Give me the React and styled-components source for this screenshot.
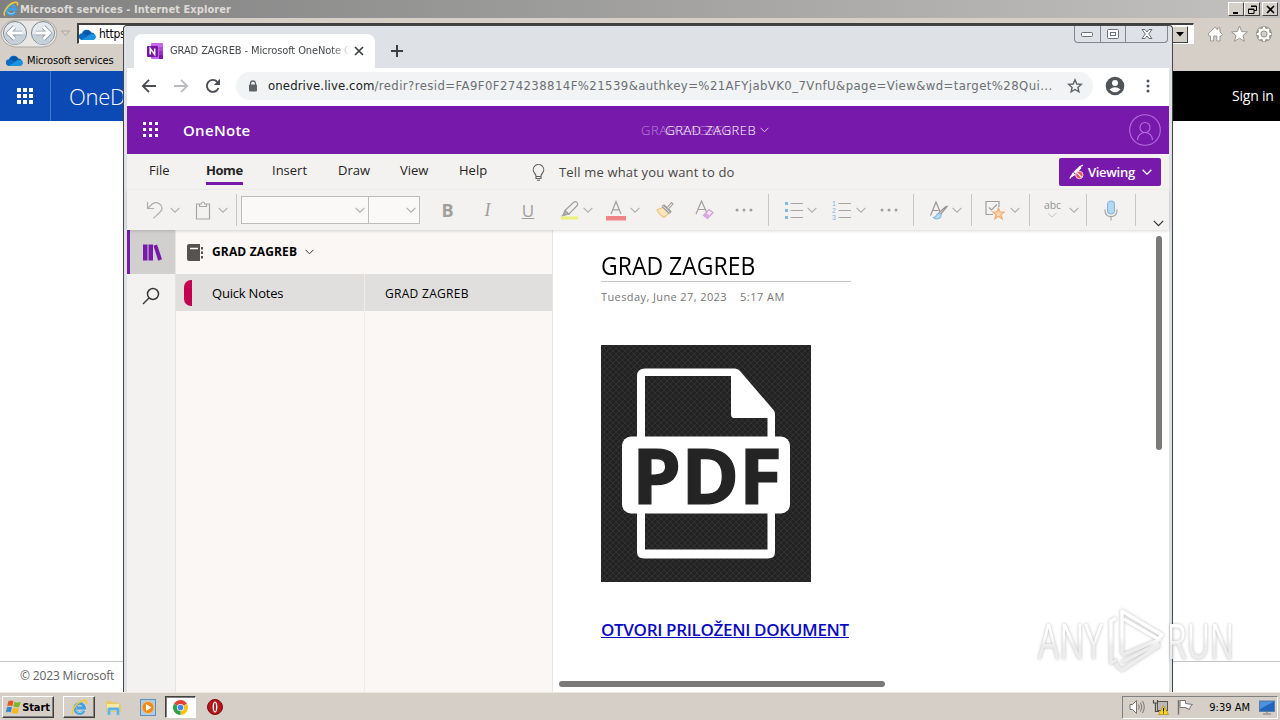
import React from 'react';
import styled, { createGlobalStyle } from 'styled-components';

const GlobalStyle = createGlobalStyle`
  * { box-sizing: border-box; }
  body { margin: 0; background: #fff; overflow: hidden; }
  svg { display: block; flex: none; }
`

const SEGOE = '"Open Sans", "Noto Sans", sans-serif';
const TAHOMA = '"DejaVu Sans Condensed", "DejaVu Sans", sans-serif';

const Desktop = styled.div`
  position: relative;
  width: 1280px;
  height: 720px;
  overflow: hidden;
  display: flex;
  flex-direction: column;
  font-family: ${SEGOE};
`

const Text = styled.span`
  font-family: ${p => p.$font || SEGOE};
  font-size: ${p => p.$size || 13}px;
  font-weight: ${p => p.$weight || 400};
  letter-spacing: ${p => p.$track || 0}px;
  color: ${p => p.$color || '#000'};
  line-height: 1;
  white-space: nowrap;
`

/* fixed width slot of a bar */
const Cell = styled.div`
  display: flex;
  flex: none;
  width: ${p => p.$w}px;
  justify-content: ${p => p.$align || 'center'};
  align-items: center;
`

/* ---------- Internet Explorer ---------- */

const IeWindow = styled.div`
  height: 692px;
  display: flex;
  flex-direction: column;
  background: #fff;
`

const IeTitle = styled.div`
  height: 18px;
  display: flex;
  align-items: center;
  padding: 0 2px 0 3px;
  background: linear-gradient(90deg, #808080, #c2c1bf);
`

const IeTitleText = styled(Text)`
  margin-left: 1px;
  flex: 1;
`

const WinButton = styled.div`
  width: 16px;
  height: 14px;
  margin-left: ${p => p.$gap || 0}px;
  display: flex;
  align-items: center;
  justify-content: center;
  background: #d4d0c8;
  border: 1px solid;
  border-color: #fff #404040 #404040 #fff;
`

const IeNav = styled.div`
  height: 31px;
  display: flex;
  align-items: center;
  background: #d6cfc7;
`

const IeAddress = styled.div`
  height: 21px;
  width: 1117px;
  flex: none;
  margin: 0 0 0 6px;
  display: flex;
  align-items: center;
  background: #fff;
  border: 1px solid #404040;
  border-width: 2px 1px 1px 2px;
  border-right-color: #fff;
  border-bottom-color: #fff;
`

const AddressText = styled(Text)`
  margin-left: 3px;
`

const AddressDrop = styled(WinButton)`
  height: 17px;
  margin-left: auto;
  margin-right: 5px;
`

const IeFavorites = styled.div`
  height: 22px;
  display: flex;
  align-items: center;
  gap: 4px;
  padding-left: 6px;
  background: #d6cfc7;
`

const IeHeader = styled.div`
  height: 50px;
  display: flex;
  background: linear-gradient(90deg, #0b4ab5 0 500px, #000 500px);
`

const Waffle = styled.div`
  width: 51px;
  display: flex;
  align-items: center;
  justify-content: center;
  border-right: 1px solid #4478ca;
`

const IeBrand = styled(Text)`
  margin: 14px 0 0 18px;
  flex: 1;
`

const IeFooter = styled.div`
  margin-top: auto;
  height: 31px;
  display: flex;
  align-items: flex-start;
  border-top: 1px solid #c4c4c4;
  padding: 8px 0 0 20px;
`

/* ---------- Chrome ---------- */

const ChromeWindow = styled.div`
  position: absolute;
  left: 123px;
  top: 25px;
  width: 1050px;
  height: 667px;
  display: flex;
  flex-direction: column;
  border: 1px solid #454545;
  border-bottom: 0;
  border-radius: 4px 4px 0 0;
  background: #dee1e6;
  padding: 0 3px;
  overflow: hidden;
`

const TabStrip = styled.div`
  height: 42px;
  flex: none;
  display: flex;
  align-items: flex-end;
  padding-left: 7px;
`

const Tab = styled.div`
  width: 241px;
  height: 34px;
  display: flex;
  align-items: center;
  padding: 0 5px 0 13px;
  background: #fff;
  border-radius: 8px 8px 0 0;
`

const TabTitle = styled(Text)`
  margin-left: 7px;
  flex: 0 0 180px;
  overflow: hidden;
  line-height: 16px;
  mask-image: linear-gradient(90deg, #000 90%, transparent);
`

const NewTab = styled.div`
  align-self: center;
  margin: 8px 0 0 15px;
`

const Caption = styled.div`
  align-self: flex-start;
  margin-left: auto;
  margin-right: 1px;
  display: flex;
  height: 17px;
  border: 1px solid #81868f;
  border-top: 0;
  border-radius: 0 0 4px 4px;
`

const CaptionButton = styled.div`
  width: ${p => p.$w}px;
  display: flex;
  align-items: center;
  justify-content: center;
  & + & { border-left: 1px solid #81868f; }
`

const Toolbar = styled.div`
  height: 38px;
  flex: none;
  display: flex;
  align-items: center;
  background: #fff;
  padding: 0 0 2px 6px;
`

const Omnibox = styled.div`
  width: 857px;
  height: 28px;
  flex: none;
  margin-left: 7px;
  display: flex;
  align-items: center;
  padding-left: 12px;
  background: #f1f3f4;
  border-radius: 14px;
`

const Url = styled(Text)`
  width: 799px;
  flex: none;
  margin-left: 10px;
  line-height: 20px;
  b { font-weight: 400; color: #202124; letter-spacing: .12px; }
`

/* ---------- OneNote ---------- */

const NoteHeader = styled.div`
  height: 48px;
  flex: none;
  display: flex;
  align-items: center;
  background: #7719aa;
`

const NoteBrand = styled(Text)`
  margin-left: 9px;
`

const GhostTitle = styled(Text)`
  margin-right: -67px;
`

const Account = styled.div`
  margin: 0 8px 0 auto;
`

const MenuBar = styled.div`
  height: 36px;
  flex: none;
  display: flex;
  align-items: center;
  background: #f3f2f1;
  padding-left: 22px;
`

const MenuItem = styled.div`
  width: ${p => p.$w}px;
  height: 36px;
  flex: none;
  display: flex;
  align-items: flex-start;
  padding-top: 10px;
`

const Underlined = styled.div`
  width: 37px;
  height: 21px;
  border-bottom: 3px solid #7719aa;
  display: flex;
  align-items: flex-start;
`

const Viewing = styled.div`
  width: 102px;
  height: 28px;
  display: flex;
  align-items: center;
  padding-left: 10px;
  gap: 4px;
  background: #7719aa;
  border-radius: 2px;
  svg:last-child { margin-left: 3px; }
`

const Ribbon = styled.div`
  height: 40px;
  flex: none;
  display: flex;
  align-items: center;
  background: #f3f2f1;
  box-shadow: 0 1px 3px rgba(0, 0, 0, .16);
  z-index: 1;
`

const Sep = styled.div`
  width: 1px;
  height: 32px;
  flex: none;
  margin-left: ${p => p.$gap || 0}px;
  background: #c8c6c4;
`

const Expand = styled.div`
  width: 28px;
  display: flex;
  justify-content: flex-end;
  padding-top: 26px;
`

const Combo = styled.div`
  width: ${p => p.$w}px;
  height: 28px;
  flex: none;
  display: flex;
  align-items: center;
  justify-content: flex-end;
  margin-left: ${p => p.$gap || 0}px;
  padding-right: 3px;
  background: #faf9f8;
  border: 1px solid #bebbb8;
  & + & { border-left: 0; }
`

const Body = styled.div`
  flex: 1;
  display: flex;
  min-height: 0;
`

const Rail = styled.div`
  width: 49px;
  flex: none;
  background: #f3f2f1;
  border-right: 1px solid #e6e3e1;
`

const RailButton = styled.div`
  height: 44px;
  width: 48px;
  display: flex;
  align-items: center;
  justify-content: center;
  background: ${p => p.$on ? '#d2d0ce' : 'transparent'};
  border-left: ${p => p.$on ? '3px solid #7719aa' : '0'};
`

const Panel = styled.div`
  width: 377px;
  flex: none;
  display: flex;
  flex-direction: column;
  background: #faf7f5;
  border-right: 1px solid #e8e5e3;
`

const Notebook = styled.div`
  height: 44px;
  display: flex;
  align-items: center;
  gap: 8px;
  padding-left: 11px;
`

const Columns = styled.div`
  flex: 1;
  display: grid;
  grid-template-columns: 188px 1fr;
`

const Column = styled.div`
  & + & { border-left: 1px solid #efecea; }
`

const Row = styled.div`
  height: 37px;
  display: flex;
  align-items: center;
  background: #e1dfdd;
  padding: ${p => p.$top || 1}px 0 0 ${p => p.$pad}px;
`

const Marker = styled.div`
  width: 8px;
  height: 26px;
  margin-right: 20px;
  background: #c3004f;
  border-radius: 7px 0 0 7px;
`

const Page = styled.div`
  flex: 1;
  display: flex;
  flex-direction: column;
  align-items: flex-start;
  position: relative;
  background: #fff;
  padding: 22px 0 0 48px;
`

const PageTitle = styled.div`
  width: 250px;
  height: 30px;
  display: flex;
  align-items: flex-start;
  padding-top: 1px;
  border-bottom: 1px solid #c6c6c6;
`

const NarrowTitle = styled(Text)`
  transform: scaleX(.92);
  transform-origin: 0 0;
`

const DateRow = styled.div`
  display: flex;
  align-items: center;
  height: 14px;
  margin-top: 7px;
`

const Picture = styled.div`
  margin-top: 42px;
`

const DocLink = styled.a`
  margin-top: 36px;
  font-size: 17px;
  font-weight: 600;
  line-height: 24px;
  letter-spacing: -.33px;
  color: #0a0ac4;
  text-decoration: underline;
  white-space: nowrap;
`

const ScrollThumb = styled.div`
  position: absolute;
  border-radius: 3px;
  background: #7c7a79;
  ${p => p.$vertical
    ? 'right: 7px; top: 6px; width: 6px; height: 214px;'
    : 'left: 6px; bottom: 5px; width: 326px; height: 6px;'}
`

/* ---------- Taskbar ---------- */

const Taskbar = styled.div`
  height: 28px;
  display: flex;
  align-items: center;
  background: #d6cfc7;
  border-top: 1px solid #ece8e2;
  padding: 1px 2px 0;
`

const TaskButton = styled.div`
  width: ${p => p.$w}px;
  height: 22px;
  flex: none;
  display: flex;
  align-items: center;
  justify-content: center;
  margin-left: ${p => p.$gap || 0}px;
  border: 1px solid;
  border-color: ${p => p.$active ? '#404040 #fff #fff #404040' : '#fff #404040 #404040 #fff'};
  box-shadow: ${p => p.$active ? 'inset 1px 1px #808080' : 'inset -1px -1px #808080'};
  background: ${p => p.$active ? '#fff' : '#d6cfc7'};
`

const Tray = styled.div`
  width: 156px;
  height: 23px;
  margin-left: auto;
  display: flex;
  align-items: center;
  border: 1px solid;
  border-color: #808080 #fff #fff #808080;
  padding-left: 4px;
`

const Clock = styled(Text)`
  margin-right: 6px;
`

const Watermark = styled.svg`
  position: absolute;
  left: 1030px;
  top: 600px;
  filter: drop-shadow(0 0 1.5px rgba(0, 0, 0, .28));
`

/* ---------- Icons ---------- */

const Chevron = ({ w = 10, c = '#b0aeac', s = 1.1 }) => (
    <svg width={w} height={w / 2 + 1.5} viewBox="0 0 10 6.5" fill="none" stroke={c} strokeWidth={s}>
        <path d="M.6 .8 5 5.2 9.4 .8" />
    </svg>
)

const Dots = ({ size, step, dot, color }) => (
    <svg width={size} height={size} fill={color}>
        {[0, 1, 2].map(r => [0, 1, 2].map(c => (
            <rect key={r + '-' + c} x={c * step} y={r * step} width={dot} height={dot} />
        )))}
    </svg>
)

const More = () => (
    <svg width="18" height="4" fill="#a19f9d">
        <circle cx="2" cy="2" r="1.5" /><circle cx="9" cy="2" r="1.5" /><circle cx="16" cy="2" r="1.5" />
    </svg>
)

const Cloud = () => (
    <svg width="17" height="11" viewBox="0 0 17 11">
        <path d="M3.5 11A3.4 3.4 0 0 1 3 4.2 5 5 0 0 1 12.3 3.6 3.8 3.8 0 0 1 13.5 11Z" fill="#0a6cc4" />
        <path d="M6 2.2A5 5 0 0 1 12.3 3.8L9 6.5 3.5 4.1Z" fill="#0556a5" />
        <path d="M2.5 10.9 11.5 5.2Q17 4 16.9 8.2 16.3 11 13.5 11H3.5Z" fill="#1b93dd" />
    </svg>
)

const IeLogo = ({ size = 17 }) => (
    <svg width={size} height={size} viewBox="0 0 18 18" fill="none">
        <path d="M13.8 12.2A5.2 5.2 0 1 1 14.3 9.5H6" stroke="#3fa0e4" strokeWidth="3" />
        <path d="M13.5 12A5 5 0 0 1 5 12" stroke="#9adcfb" strokeWidth="1" />
        <path d="M2.2 16.4C-.8 14 5 4.5 11.5 2 16 .3 17.2 2 16 5" stroke="#f5c93a" strokeWidth="1.7" />
    </svg>
)

const NavButtons = () => (
    <svg width="71" height="29" viewBox="0 0 71 29" fill="none">
        <path d="M15 1H44Q56 3 57 15 55 27 43 28H15Q2 26 1 14 3 3 15 1Z" fill="#e9e7e4" stroke="#aaa7a3" />
        <circle cx="15" cy="14" r="11.5" fill="#e5e9ed" stroke="#78838d" />
        <circle cx="43" cy="14" r="11.5" fill="#e5e9ed" stroke="#78838d" />
        <path d="M4.5 15a10.5 10.5 0 0 0 21 0ZM32.5 15a10.5 10.5 0 0 0 21 0Z" fill="#c6d0d9" />
        <path d="M22 14H9M14.5 8 8.5 14l6 6M36 14h13M43.5 8l6 6-6 6" stroke="#8f9ba6" strokeWidth="4.6" />
        <path d="M22 14H9M14.5 8 8.5 14l6 6M36 14h13M43.5 8l6 6-6 6" stroke="#fff" strokeWidth="3" />
        <path d="M61.5 12H69.5L65.5 16.5Z" fill="#d9d5cf" stroke="#aaa59e" />
    </svg>
)

const IeTools = () => (
    <svg width="66" height="18" viewBox="0 0 66 18" fill="#fff" stroke="#9a9690" strokeWidth="1">
        <path d="M1 9 8 2.2 10.5 4.6V3H13V7L15.5 9.5 14 11H13V16H9.8V11H6.7V16H3.5V11H2.3Z" />
        <path d="M32.5 1 34.7 6.5 40.5 6.9 36 10.6 37.5 16.3 32.5 13.2 27.5 16.3 29 10.6 24.5 6.9 30.3 6.5Z" />
        <circle cx="57" cy="9" r="5.5" fill="none" stroke="#9a9690" strokeWidth="4.6" />
        <g stroke="#9a9690" strokeWidth="4"><path d="M57 1V17M49 9H65M51.3 3.3 62.7 14.7M62.7 3.3 51.3 14.7" /></g>
        <g stroke="#fff" strokeWidth="2.2"><path d="M57 1.7V16.3M49.7 9H64.3M52 4 62 14M62 4 52 14" /></g>
        <circle cx="57" cy="9" r="4.6" stroke="#fff" strokeWidth="2.2" fill="#d6cfc7" />
        <circle cx="57" cy="9" r="3" fill="#d6cfc7" />
    </svg>
)

const NoteLogo = () => (
    <svg width="16" height="16" viewBox="0 0 16 16">
        <rect x="4" width="12" height="16" rx="1" fill="#ca64ea" />
        <path d="M12 4H16V8H12Z" fill="#ae4bd5" /><path d="M12 8H16V12H12Z" fill="#9332bf" />
        <path d="M12 12H16V16H12Z" fill="#7719aa" />
        <rect y="3" width="11" height="11" rx="1" fill="#74169f" />
        <path d="M3.2 11.5V5.5L7.7 11.5V5.5" fill="none" stroke="#fff" strokeWidth="1.5" />
    </svg>
)

const NavArrow = ({ right, color }) => (
    <svg width="16" height="16" viewBox="0 0 16 16" fill="none" stroke={color} strokeWidth="1.8">
        <path d={right ? 'M1 8H14M8 1.8 14.2 8 8 14.2' : 'M15 8H2M8 1.8 1.8 8 8 14.2'} />
    </svg>
)

const Reload = () => (
    <svg width="16" height="16" viewBox="0 0 16 16">
        <path d="M13.5 10A6 6 0 1 1 12.3 3.8" fill="none" stroke="#4a4d51" strokeWidth="1.9" />
        <path d="M15 .8V7H8.8Z" fill="#4a4d51" />
    </svg>
)

const Lock = () => (
    <svg width="10" height="12" viewBox="0 0 10 12">
        <path d="M2.5 6V3.5a2.5 2.5 0 0 1 5 0V6" fill="none" stroke="#5f6368" strokeWidth="1.3" />
        <rect x="1" y="4.5" width="8" height="7" rx="1" fill="#5f6368" />
    </svg>
)

const Star = () => (
    <svg width="16" height="16" viewBox="0 0 16 16" fill="none" stroke="#5f6368" strokeWidth="1.4">
        <path d="M8 1.8 9.8 6 14.3 6.4 10.9 9.4 11.9 13.8 8 11.5 4.1 13.8 5.1 9.4 1.7 6.4 6.2 6Z" />
    </svg>
)

const Profile = () => (
    <svg width="20" height="20" viewBox="0 0 20 20">
        <circle cx="10" cy="10" r="9.3" fill="#505459" />
        <circle cx="10" cy="7" r="3" fill="#fff" />
        <path d="M4.5 13.5Q10 8.8 15.5 13.5 10 19 4.5 13.5Z" fill="#fff" />
    </svg>
)

const Avatar = () => (
    <svg width="32" height="32" viewBox="0 0 32 32" fill="none" stroke="#b56ede" strokeWidth="1.1">
        <circle cx="16" cy="16" r="15.3" />
        <circle cx="16" cy="13.5" r="5" />
        <path d="M8.5 26A7.5 7.5 0 0 1 23.5 26" />
    </svg>
)

const Bulb = () => (
    <svg width="13" height="17" viewBox="0 0 13 17" fill="none" stroke="#605e5c" strokeWidth="1.1">
        <path d="M4 12.5Q4 10.5 2.5 9A5.2 5.2 0 1 1 10.5 9Q9 10.5 9 12.5ZM4 12.5V14.5H9V12.5M5 16.3H8" />
    </svg>
)

const NoEdit = () => (
    <svg width="15" height="16" viewBox="0 0 15 16" fill="none">
        <path d="M2 13.5 3 9.5 10.5 2 12.5 4 5.5 11.5Z" fill="#fff" />
        <path d="M.8 14.5 3 11M10.5 3 14 1" stroke="#fff" strokeWidth="1.4" />
        <path d="M4.5 8.5 7 10.5" stroke="#7719aa" />
        <circle cx="10.3" cy="11" r="3.7" fill="#e8515f" stroke="#fbd0d2" />
        <path d="M8 8.7 12.6 13.3" stroke="#fff" strokeWidth="1.2" />
    </svg>
)

const Undo = () => (
    <svg width="18" height="18" viewBox="0 0 18 18" fill="none" stroke="#b0aeac" strokeWidth="1.2">
        <path d="M1.5 1V7.5H8M1.5 7.5 6.5 2.8C11 -.5 17 4 15.8 8.5 15 11 11 14 7.5 17.2" />
    </svg>
)

const Clipboard = () => (
    <svg width="16" height="19" viewBox="0 0 16 19" fill="none" stroke="#a8a6a4" strokeWidth="1.2">
        <path d="M4.5 3H1.5V18H14.5V3H11.5M4.5 5.5V3H6.2Q6.5 1 8 1T9.8 3H11.5V5.5Z" />
    </svg>
)

const Highlighter = () => (
    <svg width="20" height="20" viewBox="0 0 20 20" fill="none" stroke="#a19f9d" strokeWidth="1.1">
        <rect x="1" y="16.5" width="17" height="3" fill="#eef07c" stroke="none" />
        <path d="M5 10.5 13.5 2.5Q15.5 .8 17 2.5T16.8 6L9 14 6 14.5 2.5 15.5 4.5 13Z" />
        <path d="M5 10.5 9 14 3 15.5Z" fill="#b5b3b1" />
    </svg>
)

const FontColor = () => (
    <svg width="20" height="21" viewBox="0 0 20 21" fill="none">
        <rect y="16" width="20" height="4.5" fill="#f08585" />
        <path d="M5 14 10 1.5 15 14M6.8 9.8H13.2" stroke="#a19f9d" strokeWidth="1.2" />
    </svg>
)

const Painter = () => (
    <svg width="18" height="18" viewBox="0 0 18 18" fill="none" strokeWidth="1.1">
        <path d="M1 9 7 6.5 12.5 12.5 8 16.5Q4 14.5 1 9Z" fill="#fbe6bd" stroke="#eec079" />
        <path d="M6 5.5 13.5 12.5M8 4.8 14.5 11M6 5.5 8 4 11 6.5 15.5 1.5 17 3 12.5 8 15 10.5 13.5 12.5" stroke="#a19f9d" />
    </svg>
)

const ClearFormat = () => (
    <svg width="19" height="20" viewBox="0 0 19 20" fill="none" strokeWidth="1.2">
        <path d="M1 14 6.5 1 11.5 12M3 9.5H10" stroke="#a19f9d" />
        <path d="M8.5 15.5 14 9.5 18 12.5 12.5 18.5Z" fill="#f5e8f7" stroke="#cf9ad8" />
        <path d="M8.5 15.5 11 12.8 15 15.8 12.5 18.5Z" fill="#dda9e3" />
    </svg>
)

const Bullets = ({ numbers }) => (
    <svg width="20" height="19" viewBox="0 0 20 19" fill="none">
        {[2, 9, 16].map((y, i) => (
            <g key={y}>
                <path d={`M6.5 ${y + .5}H19`} stroke="#a8a6a4" strokeWidth="1.1" />
                {numbers
                    ? <text x="0" y={y + 3} fontSize="7" fontFamily="Liberation Sans" fill="#7fb2d8">{i + 1}</text>
                    : <rect x="1" y={y - 1} width="3" height="3" fill="#86b9de" />}
            </g>
        ))}
    </svg>
)

const Styles = () => (
    <svg width="20" height="20" viewBox="0 0 20 20" fill="none" strokeWidth="1.2">
        <path d="M1.5 15.5 7 2 11 11.5M3.5 10.5H9.5" stroke="#979593" />
        <path d="M18 6.5 11.5 14.5 9.8 13 16.5 6.8Z" stroke="#979593" />
        <path d="M4.5 17.5Q7 17 8 14.5 10 12.5 12 14.5 12.5 18 8.5 18.8 6 19 4.5 17.5Z" fill="#b7daf2" stroke="#8dbce0" />
    </svg>
)

const TagIcon = () => (
    <svg width="20" height="20" viewBox="0 0 20 20" fill="none" strokeWidth="1.2">
        <path d="M8 14.5H1V1.5H14V7M4 7.5 6.5 10 12 4.5" stroke="#a19f9d" />
        <path d="M13.5 8 15 12H19.2L15.9 14.6 17.2 18.8 13.5 16.2 9.8 18.8 11.1 14.6 7.8 12H12Z" fill="#fbd6af" stroke="#f2ac76" />
    </svg>
)

const Spelling = () => (
    <svg width="18" height="20" viewBox="0 0 18 20" fill="none">
        <text x="0" y="9" fontSize="10.5" fontFamily="Open Sans" fill="#979593" textLength="17">abc</text>
        <path d="M4 13.5 8 17 12.5 13" stroke="#c8c6c4" />
    </svg>
)

const Mic = () => (
    <svg width="14" height="21" viewBox="0 0 14 21" fill="none" strokeWidth="1.1">
        <rect x="3.5" y="1" width="7" height="13" rx="3.5" fill="#b4d8f1" stroke="#84b6dc" />
        <path d="M1 9.5V11Q1.5 16.5 7 16.5T13 11V9.5M7 16.5V20.5" stroke="#a19f9d" />
    </svg>
)

const Books = () => (
    <svg width="19" height="17" viewBox="0 0 19 17" fill="#7719aa">
        <path d="M0 .5H4.5V16.5H0ZM5.5 .5H10V16.5H5.5ZM10.5 1.8 14 .5 19 15.3 15.2 16.7Z" />
    </svg>
)

const SearchIcon = () => (
    <svg width="18" height="18" viewBox="0 0 18 18" fill="none" stroke="#3b3a39" strokeWidth="1.5">
        <circle cx="11" cy="7" r="5.5" /><path d="M7 11 1 17" />
    </svg>
)

const BookIcon = () => (
    <svg width="17" height="17" viewBox="0 0 17 17">
        <path d="M2 0H13V17H2Q0 17 0 15V2Q0 0 2 0Z" fill="#55534f" />
        <path d="M3 4.5H11" stroke="#fff" strokeWidth="1.5" />
        <path d="M15 3V5.5M15 7.5V10M15 12V14.5" stroke="#55534f" strokeWidth="2" />
    </svg>
)

const PdfPicture = () => (
    <svg width="210" height="237" viewBox="0 0 210 237">
        <defs>
            <pattern id="weave" width="6" height="6" patternUnits="userSpaceOnUse">
                <rect width="6" height="6" fill="#242424" />
                <path d="M0 0 6 6M6 0 0 6" stroke="#303030" strokeWidth="1" />
                <path d="M3 0V1.5M0 3H1.5" stroke="#1b1b1b" />
            </pattern>
        </defs>
        <rect width="210" height="237" fill="url(#weave)" />
        <path d="M44 23.5H134Q137 23.5 139 26L172.5 65Q174 67 174 69V207Q174 213.5 167 213.5H43Q36 213.5 36 207V31Q36 23.5 44 23.5ZM44 31V204.5H166.5V73H133Q130 73 130 69V31Z" fill="#fff" fillRule="evenodd" />
        <rect x="21" y="91.5" width="168" height="77" rx="9" fill="#fff" />
        <text x="31" y="159" fontFamily="Open Sans" fontWeight="700" fontSize="77" fill="#242424" stroke="#242424" strokeWidth="1.2" textLength="150" lengthAdjust="spacingAndGlyphs">PDF</text>
    </svg>
)

const WindowsFlag = () => (
    <svg width="16" height="16" viewBox="0 0 16 16">
        <path d="M2.5 2Q5 .8 7.5 2.3L6.3 7.3Q4 6 1.2 7.2Z" fill="#e5532c" />
        <path d="M8.5 2.7Q11 4.3 14.7 2.7L13.3 7.7Q10 9 7.3 7.5Z" fill="#7db928" />
        <path d="M1 8.2Q3.8 7 6 8.5L4.7 13.5Q2.5 12-.2 13.3Z" fill="#3787cf" />
        <path d="M7 8.8Q10 10.3 13 8.9L11.8 14Q8.5 15.2 5.8 13.8Z" fill="#f5b91d" />
    </svg>
)

const Folder = () => (
    <svg width="17" height="17" viewBox="0 0 17 17">
        <path d="M1 2H6L7.5 3.5H14V6H16V13H1Z" fill="#e9c866" />
        <path d="M2 5H14V12H2Z" fill="#fae9a2" />
        <path d="M2.5 16V10Q2.5 8.5 4 8.5H13Q14.5 8.5 14.5 10V16H11.5V11.5H5.5V16Z" fill="#62b1dc" stroke="#97d2ee" strokeWidth=".6" />
    </svg>
)

const Player = () => (
    <svg width="17" height="17" viewBox="0 0 17 17">
        <rect x=".5" y=".5" width="15" height="16" fill="#a5cdee" stroke="#5f91bb" />
        <circle cx="8" cy="8.5" r="6" fill="#f18a18" stroke="#f6c57a" />
        <path d="M6 5 11.5 8.5 6 12Z" fill="#fff" />
    </svg>
)

const ChromeLogo = () => (
    <svg width="15" height="15" viewBox="0 0 16 16">
        <path d="M8 8 1.1 4A8 8 0 0 1 14.9 4Z" fill="#df4335" />
        <path d="M8 8 14.9 4A8 8 0 0 1 8 16Z" fill="#fbc116" />
        <path d="M8 8 8 16A8 8 0 0 1 1.1 4Z" fill="#2da14c" />
        <circle cx="8" cy="8" r="3.8" fill="#fff" /><circle cx="8" cy="8" r="3" fill="#4285f4" />
    </svg>
)

const OperaLogo = () => (
    <svg width="16" height="16" viewBox="0 0 16 16">
        <circle cx="8" cy="8" r="7.5" fill="#b5161b" stroke="#7d0b10" />
        <ellipse cx="8" cy="8" rx="2.4" ry="5.5" fill="#fff" />
        <ellipse cx="8" cy="8" rx=".9" ry="4.5" fill="#8e0d12" />
    </svg>
)

const Speaker = () => (
    <svg width="16" height="16" viewBox="0 0 16 16" fill="none" stroke="#77736e">
        <path d="M1 5.5H3.5L7.5 1.5V14.5L3.5 10.5H1Z" fill="#fff" />
        <path d="M9.5 5.5Q11 8 9.5 10.5M11.5 3.5Q14 8 11.5 12.5M13.5 2Q17 8 13.5 14" />
    </svg>
)

const Network = () => (
    <svg width="17" height="16" viewBox="0 0 17 16">
        <rect x="5.5" y="2.5" width="10" height="9" fill="#bdbab6" stroke="#55534f" />
        <path d="M1.5 1V4H5.5V1M3.5 4V12.5H7" fill="none" stroke="#4b4947" strokeWidth="1.2" />
        <path d="M11.5 6.5 16.5 15.5H6.5Z" fill="#ffd51e" stroke="#a47b00" strokeWidth=".6" />
        <path d="M11.5 9V12.5M11.5 13.5V14.5" stroke="#000" />
    </svg>
)

const Flag = () => (
    <svg width="17" height="16" viewBox="0 0 17 16" fill="#fff" stroke="#77736e">
        <path d="M1.5 1V15.5" strokeWidth="1.5" />
        <path d="M3 1.5H8.5V4.5L15.5 5.5Q13 6.5 12.5 10.5L8 8.5H3Z" />
    </svg>
)

const Monitor = () => (
    <svg width="16" height="15" viewBox="0 0 16 15">
        <rect x=".5" y="1" width="15" height="10.5" fill="#2065bd" stroke="#597da8" />
        <path d="M1 1.5H15L1 9Z" fill="#4d92db" />
        <path d="M4 14H12M7 12H9" stroke="#777" />
    </svg>
)

function InternetExplorer() {
    return (
        <IeWindow>
            <IeTitle>
                <IeLogo size={16} />
                <IeTitleText $font={TAHOMA} $size={11} $weight={700} $color="#dedbd6" $track={0.06}>Microsoft services - Internet Explorer</IeTitleText>
                <WinButton><svg width="9" height="9"><path d="M1 8H6" stroke="#000" strokeWidth="2" /></svg></WinButton>
                <WinButton>
                    <svg width="9" height="9" fill="none" stroke="#000"><path d="M3 1H8.5V5.5H6M.5 4H6V8.5H.5ZM.5 4.5H6M3 1.5H8.5" /></svg>
                </WinButton>
                <WinButton $gap={2}><svg width="9" height="9" stroke="#000" strokeWidth="1.6"><path d="M1 1 8 8M8 1 1 8" /></svg></WinButton>
            </IeTitle>
            <IeNav>
                <NavButtons />
                <IeAddress>
                    <Cloud />
                    <AddressText $font={TAHOMA} $size={12} $track={-0.3}>https://onedrive.live.com</AddressText>
                    <AddressDrop><svg width="8" height="5"><path d="M0 0H8L4 4.5Z" /></svg></AddressDrop>
                </IeAddress>
                <Cell $w={79} $align="flex-end"><IeTools /></Cell>
            </IeNav>
            <IeFavorites>
                <Cloud />
                <Text $font={TAHOMA} $size={11} $track={-0.12}>Microsoft services</Text>
            </IeFavorites>
            <IeHeader>
                <Waffle><Dots size={16} step={6} dot={4} color="#fff" /></Waffle>
                <IeBrand $size={22} $weight={300} $color="#fff" $track={-0.3}>OneDrive</IeBrand>
                <Cell $w={48} $align="flex-start"><Text $size={14} $color="#fff" $track={-0.2}>Sign in</Text></Cell>
            </IeHeader>
            <IeFooter><Text $size={12} $color="#616161" $track={-0.15}>© 2023 Microsoft</Text></IeFooter>
        </IeWindow>
    );
}

function ChromeTop() {
    return (
        <>
            <TabStrip>
                <Tab>
                    <NoteLogo />
                    <TabTitle $font={TAHOMA} $size={11} $color="#45484c" $track={-0.1}>GRAD ZAGREB - Microsoft OneNote Online</TabTitle>
                    <svg width="20" height="10" viewBox="0 0 20 10" stroke="#3c4043" strokeWidth="1.7"><path d="M5 1 13 9M13 1 5 9" /></svg>
                </Tab>
                <NewTab><svg width="14" height="14" stroke="#3c4043" strokeWidth="2"><path d="M7 1V13M1 7H13" /></svg></NewTab>
                <Caption>
                    <CaptionButton $w={25}><svg width="13" height="6"><rect x=".5" y="1.5" width="11" height="4" rx="1" fill="#fff" stroke="#6b7078" /></svg></CaptionButton>
                    <CaptionButton $w={25}>
                        <svg width="12" height="10" fill="#fff" stroke="#6b7078"><rect x=".5" y=".5" width="11" height="9" rx="1" /><rect x="3.5" y="3.5" width="5" height="3" /></svg>
                    </CaptionButton>
                    <CaptionButton $w={42}>
                        <svg width="12" height="10" viewBox="0 0 12 10" fill="#fff" stroke="#6b7078"><path d="M1 .5H4L6 3 8 .5H11L7.7 5 11 9.5H8L6 7 4 9.5H1L4.3 5Z" /></svg>
                    </CaptionButton>
                </Caption>
            </TabStrip>
            <Toolbar>
                <Cell $w={32}><NavArrow color="#4a4d51" /></Cell>
                <Cell $w={32}><NavArrow right color="#b9bbbe" /></Cell>
                <Cell $w={32}><Reload /></Cell>
                <Omnibox>
                    <Lock />
                    <Url $font={TAHOMA} $size={13} $color="#6c7075" $track={0.42}><b>onedrive.live.com</b>/redir?resid=FA9F0F274238814F%21539&amp;authkey=%21AFYjabVK0_7VnfU&amp;page=View&amp;wd=target%28Qui...</Url>
                    <Star />
                </Omnibox>
                <Cell $w={44}><Profile /></Cell>
                <Cell $w={22}><svg width="4" height="14" fill="#505459"><circle cx="2" cy="2" r="1.5" /><circle cx="2" cy="7" r="1.5" /><circle cx="2" cy="12" r="1.5" /></svg></Cell>
            </Toolbar>
        </>
    );
}

function MenuRow() {
    return (
        <MenuBar>
            <MenuItem $w={57}><Text $color="#252423">File</Text></MenuItem>
            <MenuItem $w={66}><Underlined><Text $weight={700} $track={-0.45} $color="#252423">Home</Text></Underlined></MenuItem>
            <MenuItem $w={66}><Text $color="#252423">Insert</Text></MenuItem>
            <MenuItem $w={62}><Text $color="#252423">Draw</Text></MenuItem>
            <MenuItem $w={59}><Text $color="#252423">View</Text></MenuItem>
            <MenuItem $w={73}><Text $color="#252423">Help</Text></MenuItem>
            <Cell $w={27} $align="flex-start"><Bulb /></Cell>
            <Cell $w={500} $align="flex-start"><Text $color="#484644" $track={0.17}>Tell me what you want to do</Text></Cell>
            <Viewing>
                <NoEdit />
                <Text $weight={600} $color="#fff" $track={-0.3}>Viewing</Text>
                <Chevron c="#fff" s={1.3} />
            </Viewing>
        </MenuBar>
    );
}

function RibbonRow() {
    return (
        <Ribbon>
            <Cell $w={37} $align="flex-end"><Undo /></Cell>
            <Cell $w={21}><Chevron /></Cell>
            <Cell $w={26} $align="flex-end"><Clipboard /></Cell>
            <Cell $w={23}><Chevron /></Cell>
            <Sep $gap={2} />
            <Combo $w={128} $gap={4}><Chevron /></Combo>
            <Combo $w={51}><Chevron /></Combo>
            <Cell $w={55}><Text $size={18} $weight={700} $color="#a19f9d">B</Text></Cell>
            <Cell $w={25}><Text $size={18} $font={'"Liberation Serif", serif'} $color="#a19f9d"><i>I</i></Text></Cell>
            <Cell $w={56}><Text $size={17} $color="#a19f9d"><u>U</u></Text></Cell>
            <Cell $w={27}><Highlighter /></Cell>
            <Cell $w={10}><Chevron /></Cell>
            <Cell $w={33} $align="flex-end"><FontColor /></Cell>
            <Cell $w={18}><Chevron /></Cell>
            <Cell $w={42}><Painter /></Cell>
            <Cell $w={36}><ClearFormat /></Cell>
            <Cell $w={43}><More /></Cell>
            <Sep $gap={3} />
            <Cell $w={35} $align="flex-end"><Bullets /></Cell>
            <Cell $w={16}><Chevron /></Cell>
            <Cell $w={32} $align="flex-end"><Bullets numbers /></Cell>
            <Cell $w={18}><Chevron /></Cell>
            <Cell $w={37}><More /></Cell>
            <Sep $gap={6} />
            <Cell $w={35} $align="flex-end"><Styles /></Cell>
            <Cell $w={16}><Chevron /></Cell>
            <Sep $gap={6} />
            <Cell $w={33} $align="flex-end"><TagIcon /></Cell>
            <Cell $w={20}><Chevron /></Cell>
            <Sep $gap={4} />
            <Cell $w={32} $align="flex-end"><Spelling /></Cell>
            <Cell $w={23}><Chevron /></Cell>
            <Sep $gap={1} />
            <Cell $w={48}><Mic /></Cell>
            <Sep />
            <Expand><Chevron w={11} c="#323130" /></Expand>
        </Ribbon>
    );
}

function OneNote() {
    return (
        <>
            <NoteHeader>
                <Cell $w={47}><Dots size={16} step={6} dot={3} color="#fff" /></Cell>
                <Cell $w={467} $align="flex-start"><NoteBrand $size={15} $weight={600} $color="#fff" $track={0.3}>OneNote</NoteBrand></Cell>
                <GhostTitle $weight={300} $color="#bd83dc" $track={0.55}>GRAD ZAGREB</GhostTitle>
                <Text $weight={300} $color="#fff" $track={0.5}>GRAD ZAGREB</Text>
                <Cell $w={16}><Chevron w={9} c="#e1c6f0" /></Cell>
                <Account><Avatar /></Account>
            </NoteHeader>
            <MenuRow />
            <RibbonRow />
            <Body>
                <Rail>
                    <RailButton $on><Books /></RailButton>
                    <RailButton><SearchIcon /></RailButton>
                </Rail>
                <Panel>
                    <Notebook>
                        <BookIcon />
                        <Text $size={12} $weight={700} $track={0.15}>GRAD ZAGREB</Text>
                        <Chevron w={9} c="#323130" />
                    </Notebook>
                    <Columns>
                        <Column><Row $pad={8}><Marker /><Text $track={-0.2}>Quick Notes</Text></Row></Column>
                        <Column><Row $pad={20} $top={2}><Text $size={12} $track={0.3}>GRAD ZAGREB</Text></Row></Column>
                    </Columns>
                </Panel>
                <Page>
                    <PageTitle><NarrowTitle $size={25}>GRAD ZAGREB</NarrowTitle></PageTitle>
                    <DateRow>
                        <Cell $w={139} $align="flex-start"><Text $size={11} $color="#767676" $track={0.4}>Tuesday, June 27, 2023</Text></Cell>
                        <Text $size={11} $color="#767676" $track={0.5}>5:17 AM</Text>
                    </DateRow>
                    <Picture><PdfPicture /></Picture>
                    <DocLink>OTVORI PRILOŽENI DOKUMENT</DocLink>
                    <ScrollThumb $vertical />
                    <ScrollThumb />
                </Page>
            </Body>
        </>
    );
}

function Brand() {
    return (
        <Watermark width="210" height="80" viewBox="0 0 210 80">
            <defs>
                <linearGradient id="fade" gradientUnits="userSpaceOnUse" x1="0" y1="36" x2="0" y2="46">
                    <stop offset="0" stopColor="#fff" />
                    <stop offset="1" stopColor="#ededed" />
                </linearGradient>
            </defs>
            <g fill="none" stroke="url(#fade)" strokeWidth="3.5" strokeLinejoin="round">
                <path d="M86 18 81 21V63L87 60M92 54V11L132 35 128 39 94 19" />
                <path d="M92 55 131 39M92 62 129 43M87 63V66L92 70 130 45" />
            </g>
            <g fontFamily="Open Sans" fontSize="50" fill="url(#fade)">
                <text x="8" y="59" textLength="65" lengthAdjust="spacingAndGlyphs">ANY</text>
                <text x="137" y="59" textLength="67" lengthAdjust="spacingAndGlyphs">RUN</text>
            </g>
        </Watermark>
    );
}

function Bottom() {
    return (
        <Taskbar>
            <TaskButton $w={52}>
                <WindowsFlag />
                <Text $font={TAHOMA} $size={11} $weight={700} $track={-0.1}>Start</Text>
            </TaskButton>
            <TaskButton $w={32} $gap={9}><IeLogo /></TaskButton>
            <Cell $w={36}><Folder /></Cell>
            <Cell $w={34}><Player /></Cell>
            <TaskButton $w={31} $active><ChromeLogo /></TaskButton>
            <Cell $w={37}><OperaLogo /></Cell>
            <Tray>
                <Cell $w={20}><Speaker /></Cell>
                <Cell $w={27}><Network /></Cell>
                <Cell $w={22}><Flag /></Cell>
                <Cell $w={60} $align="flex-end"><Clock $font={TAHOMA} $size={11}>9:39 AM</Clock></Cell>
                <Cell $w={21}><Monitor /></Cell>
            </Tray>
        </Taskbar>
    );
}

function App() {
    return (
        <Desktop>
            <GlobalStyle />
            <InternetExplorer />
            <ChromeWindow>
                <ChromeTop />
                <OneNote />
            </ChromeWindow>
            <Brand />
            <Bottom />
        </Desktop>
    );
}

export default App;
